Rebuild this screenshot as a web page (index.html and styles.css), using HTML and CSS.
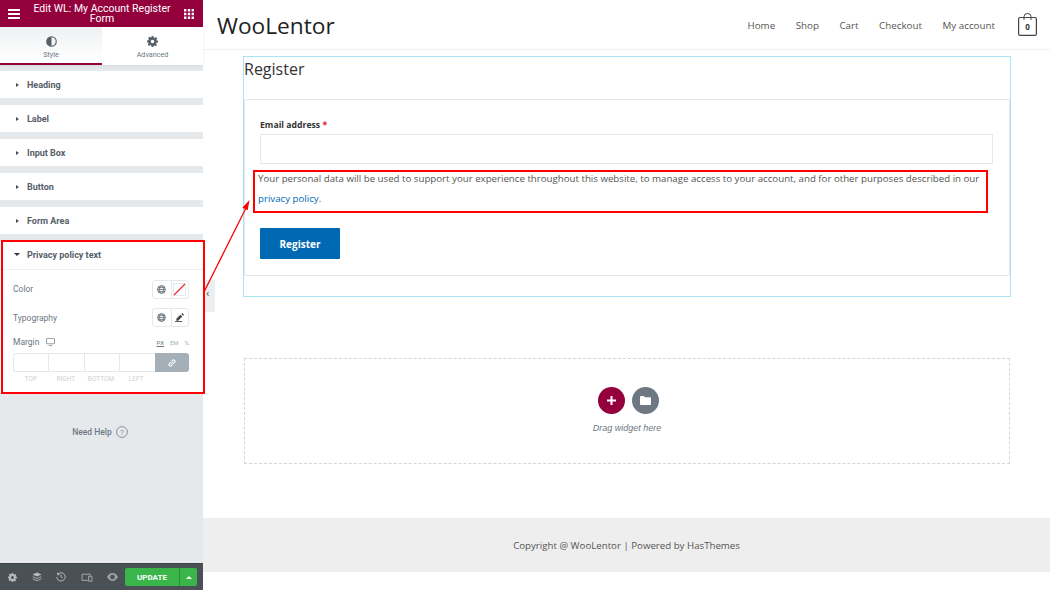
FILE: index.html
```html
<!DOCTYPE html>
<html lang="en">
<head>
<meta charset="utf-8">
<title>Edit WL: My Account Register Form</title>
<link rel="stylesheet" href="styles.css">
</head>
<body>
<div class="app">
  <aside class="panel">
    <header class="panel-head">
      <svg class="ic-menu" viewBox="0 0 12 10" width="12" height="10"><path d="M0 0h12v2H0zM0 4h12v2H0zM0 8h12v2H0z" fill="#fff"/></svg>
      <div class="panel-title">Edit WL: My Account Register Form</div>
      <svg class="ic-grid" viewBox="0 0 10 10" width="10" height="10"><path fill="#fff" d="M0 0h2.400v2.400H0zM3.800 0h2.400v2.400H3.800zM7.600 0H10v2.400H7.600zM0 3.800h2.400v2.400H0zM3.800 3.800h2.400v2.400H3.800zM7.600 3.800H10v2.400H7.600zM0 7.600h2.400V10H0zM3.800 7.600h2.400V10H3.800zM7.600 7.600H10V10H7.600z"/></svg>
    </header>
    <nav class="tabs">
      <div class="tab tab-active">
        <svg viewBox="0 0 12 12" width="11" height="11"><circle cx="6" cy="6" r="5.200" fill="none" stroke="#556068" stroke-width="1.200"/><path d="M6 .8a5.200 5.200 0 0 0 0 10.400z" fill="#556068"/></svg>
        <span>Style</span>
      </div>
      <div class="tab">
        <svg viewBox="0 0 12 12" width="11" height="11"><path fill="#556068" fill-rule="evenodd" d="M5 0h2l.3 1.600 1.100.5L9.800 1.200l1.400 1.400-.9 1.400.5 1.100L12 5v2l-1.600.3-.5 1.100.9 1.400-1.400 1.400-1.400-.9-1.100.5L7 12H5l-.3-1.600-1.100-.5-1.400.9-1.400-1.400.9-1.400-.5-1.100L0 7V5l1.600-.3.5-1.100-.9-1.400 1.400-1.400 1.400.9 1.100-.5zM6 4a2 2 0 1 0 0 4 2 2 0 0 0 0-4z"/></svg>
        <span>Advanced</span>
      </div>
    </nav>
    <div class="sections">
      <div class="section"><i class="caret"></i>Heading</div>
      <div class="section"><i class="caret"></i>Label</div>
      <div class="section"><i class="caret"></i>Input Box</div>
      <div class="section"><i class="caret"></i>Button</div>
      <div class="section"><i class="caret"></i>Form Area</div>
      <div class="privacy">
        <div class="section section-open"><i class="caret-down"></i>Privacy policy text</div>
        <div class="controls">
          <div class="control">
            <span>Color</span>
            <div class="btn-pair">
              <span class="mini">
                <svg viewBox="0 0 10 10" width="9" height="9"><circle cx="5" cy="5" r="4.300" fill="none" stroke="#556068"/><path d="M.7 5h8.600M5 .7c-3 2.600-3 6 0 8.600M5 .7c3 2.600 3 6 0 8.600M1.300 2.900h7.400M1.300 7.100h7.400" fill="none" stroke="#556068" stroke-width=".8"/></svg>
              </span>
              <span class="mini">
                <svg viewBox="0 0 13 13" width="13" height="13"><rect x=".5" y=".5" width="12" height="12" fill="none" stroke="#e6e9ec"/><line x1="1" y1="12" x2="12" y2="1" class="swatch-slash"/></svg>
              </span>
            </div>
          </div>
          <div class="control">
            <span>Typography</span>
            <div class="btn-pair">
              <span class="mini">
                <svg viewBox="0 0 10 10" width="9" height="9"><circle cx="5" cy="5" r="4.300" fill="none" stroke="#556068"/><path d="M.7 5h8.600M5 .7c-3 2.600-3 6 0 8.600M5 .7c3 2.600 3 6 0 8.600M1.300 2.900h7.400M1.300 7.100h7.400" fill="none" stroke="#556068" stroke-width=".8"/></svg>
              </span>
              <span class="mini">
                <svg viewBox="0 0 10 10" width="9" height="9"><path d="M1.500 6.500 6 2l2 2-4.500 4.500H1.500z" fill="#3f444b"/><path d="M7 1 8 0l2 2-1 1z" fill="#3f444b"/><path d="M0 9.500h8" stroke="#3f444b"/></svg>
              </span>
            </div>
          </div>
          <div class="margin-head">
            <span class="margin-label">Margin
              <svg viewBox="0 0 10 9" width="9" height="8"><rect x=".5" y=".5" width="9" height="6" rx=".6" fill="none" stroke="#8a939b"/><path d="M3 8.500h4" stroke="#8a939b"/></svg>
            </span>
            <span class="units"><u>PX</u><span>EM</span><span>%</span></span>
          </div>
          <div class="dims">
            <div class="dim"></div><div class="dim"></div><div class="dim"></div><div class="dim"></div>
            <div class="dim-link">
              <svg viewBox="0 0 10 10" width="8" height="8"><path d="M4.200 5.800 5.800 4.200M3.400 4.200 1.800 5.800a1.600 1.600 0 0 0 2.400 2.400l1.600-1.600M6.600 5.800l1.600-1.600a1.600 1.600 0 0 0-2.400-2.400L4.200 3.400" fill="none" stroke="#fff" stroke-width="1.400"/></svg>
            </div>
          </div>
          <div class="dim-labels"><span>TOP</span><span>RIGHT</span><span>BOTTOM</span><span>LEFT</span><span></span></div>
        </div>
      </div>
      <div class="help">Need Help
        <svg viewBox="0 0 12 12" width="12" height="12"><circle cx="6" cy="6" r="5.400" fill="none" stroke="#8a939b"/><text x="6" y="8.600" text-anchor="middle" class="help-q">?</text></svg>
      </div>
    </div>
    <footer class="panel-foot">
      <div class="foot-icons">
        <svg viewBox="0 0 12 12" width="9" height="9"><path fill="#b5bbc0" fill-rule="evenodd" d="M5 0h2l.3 1.600 1.100.5L9.800 1.200l1.400 1.400-.9 1.400.5 1.100L12 5v2l-1.600.3-.5 1.100.9 1.400-1.400 1.400-1.400-.9-1.100.5L7 12H5l-.3-1.600-1.100-.5-1.400.9-1.400-1.400.9-1.400-.5-1.100L0 7V5l1.600-.3.5-1.100-.9-1.400 1.400-1.400 1.400.9 1.100-.5zM6 4a2 2 0 1 0 0 4 2 2 0 0 0 0-4z"/></svg>
        <svg viewBox="0 0 12 12" width="10" height="10"><path fill="#b5bbc0" d="M6 .5 11.500 3 6 5.500.5 3z"/><path fill="none" stroke="#b5bbc0" d="M.8 5.600 6 8l5.200-2.400M.8 8.200 6 10.600l5.200-2.400"/></svg>
        <svg viewBox="0 0 12 12" width="10" height="10"><path fill="none" stroke="#b5bbc0" stroke-width="1.200" d="M2.200 2.600A5 5 0 1 1 1 6M1.800 .8v2.400h2.400M6 3.200V6l2 1.200"/></svg>
        <svg viewBox="0 0 14 11" width="12" height="9"><path fill="none" stroke="#b5bbc0" d="M8 9H1V1.500h10V3M9 4h4v6H9z"/></svg>
        <svg viewBox="0 0 14 10" width="11" height="8"><path fill="#9aa1a7" fill-rule="evenodd" d="M7 0c3 0 5.400 2 7 5-1.600 3-4 5-7 5S1.600 8 0 5c1.600-3 4-5 7-5zm0 2a3 3 0 1 0 0 6 3 3 0 0 0 0-6z"/></svg>
      </div>
      <div class="update">
        <span class="update-main">UPDATE</span>
        <span class="update-more"><i></i></span>
      </div>
    </footer>
  </aside>

  <div class="collapse">&#8249;</div>

  <main class="site">
    <header class="site-head">
      <div class="logo">WooLentor</div>
      <nav class="menu">
        <span>Home</span><span>Shop</span><span>Cart</span><span>Checkout</span><span>My account</span>
      </nav>
      <div class="bag">
        <svg viewBox="0 0 19 23" width="19" height="23"><rect x=".6" y="4.500" width="17.800" height="17.900" rx="1.500" fill="none" stroke="#444" stroke-width="1.200"/><path d="M6 7V3.500a3.500 3 0 0 1 7 0V7" fill="none" stroke="#444"/></svg>
        <b>0</b>
      </div>
    </header>

    <div class="content">
      <section class="widget">
        <h2>Register</h2>
        <div class="form-box">
          <label class="field-label">Email address <em>*</em></label>
          <div class="input"></div>
          <p class="policy">Your personal data will be used to support your experience throughout this website, to manage access to your account, and for other purposes described in our <a>privacy policy</a>.</p>
          <div class="submit">Register</div>
        </div>
      </section>

      <section class="dropzone">
        <div class="drop-btns">
          <span class="circle circle-add"><svg viewBox="0 0 9 9" width="9" height="9"><path d="M3.500 0h2v3.500H9v2H5.500V9h-2V5.500H0v-2h3.500z" fill="#fff"/></svg></span>
          <span class="circle circle-lib"><svg viewBox="0 0 11 9" width="11" height="9"><path d="M0 1a1 1 0 0 1 1-1h3l1 1.300h5a1 1 0 0 1 1 1V8a1 1 0 0 1-1 1H1a1 1 0 0 1-1-1z" fill="#fff"/></svg></span>
        </div>
        <div class="drop-text">Drag widget here</div>
      </section>
    </div>

    <footer class="site-foot">Copyright @ WooLentor | Powered by HasThemes</footer>
  </main>
</div>

<div class="mark mark-panel"></div>
<div class="mark mark-text"></div>
<svg class="arrow" viewBox="0 0 48 94" width="48" height="94"><path d="M0 92 43 6" stroke="#f00" stroke-width="1.300" fill="none"/><path d="M45.500 0 43.700 10.300 38.300 7.700z" fill="#f00"/></svg>
</body>
</html>
```
FILE: styles.css
```css
* { box-sizing: border-box; }
html, body { margin: 0; height: 100%; }
body { width: 1050px; height: 590px; overflow: hidden; background: #fff; position: relative; font-family: "Open Sans", sans-serif; color: #444; }
.app { display: flex; height: 590px; }

.panel { width: 203px; flex: none; display: flex; flex-direction: column; background: #e6e9ec; font-family: Roboto, sans-serif; }
.panel-head { height: 27px; background: #93003c; display: flex; align-items: center; padding: 0 9px 0 8px; color: #fff; }
.panel-title { flex: 1; text-align: center; font-size: 10.500px; line-height: 10px; font-weight: 400; padding: 0 8px; }
.tabs { height: 38px; display: flex; background: #fff; box-shadow: 0 1px 3px rgba(0,0,0,.08); }
.tab { width: 102px; display: flex; flex-direction: column; align-items: center; padding-top: 9px; gap: 3px; font-size: 7.200px; color: #6d7882; }
.tab:last-child { flex: 1; }
.tab-active { background: linear-gradient(#eef0f2, #fff 90%); border-bottom: 2px solid #93003c; }

.sections { flex: 1; padding-top: 6px; }
.section { height: 27px; margin-bottom: 7px; background: #fff; display: flex; align-items: center; padding-left: 16px; font-size: 9px; font-weight: 700; color: #556068; }
.caret { width: 0; height: 0; border-left: 3px solid #4a4f55; border-top: 2.500px solid transparent; border-bottom: 2.500px solid transparent; margin-right: 8px; }
.caret-down { width: 0; height: 0; border-top: 3px solid #33373c; border-left: 3px solid transparent; border-right: 3px solid transparent; margin: 0 7px 0 -2px; }
.privacy { background: #fff; height: 152px; }
.section-open { height: 29px; margin: 0; padding-bottom: 1px; border-bottom: 1px solid #eef0f2; }
.controls { padding: 2px 14px 0 13px; color: #6d7882; font-size: 8.500px; }
.control { height: 28.500px; display: flex; justify-content: space-between; align-items: center; padding-top: 6px; }
.btn-pair { display: flex; border: 1px solid #e6e9ec; border-radius: 3px; height: 19px; }
.mini { width: 17.500px; display: flex; align-items: center; justify-content: center; }
.mini + .mini { border-left: 1px solid #e6e9ec; }
.swatch-slash { stroke: #f01c28; stroke-width: 1.100; }
.margin-head { display: flex; justify-content: space-between; align-items: center; height: 12px; margin-top: 7px; }
.margin-label { display: flex; align-items: center; gap: 7px; }
.units { display: flex; gap: 6px; font-size: 6px; color: #a4afb7; }
.units u { color: #6d7882; }
.dims { display: flex; height: 19px; margin-top: 5px; }
.dim { flex: 1; border: 1px solid #e6e9ec; border-right: 0; }
.dim:first-child { border-radius: 3px 0 0 3px; }
.dim-link { flex: 1; background: #a4afb7; border-radius: 0 3px 3px 0; display: flex; align-items: center; justify-content: center; }
.dim-labels { display: flex; margin-top: 3px; }
.dim-labels span { flex: 1; text-align: center; font-size: 6.500px; color: #ccd1d5; }
.help { margin-top: 33px; padding-right: 3px; display: flex; justify-content: center; align-items: center; gap: 4px; font-size: 8.500px; font-weight: 500; color: #6d7882; }
.help-q { font: 8px Roboto, sans-serif; fill: #8a939b; }
.panel-foot { height: 27px; background: #495157; border-top: 1px solid #3f444b; display: flex; align-items: center; padding-right: 6px; }
.foot-icons { width: 125px; flex: none; display: flex; justify-content: space-between; align-items: center; padding: 0 7px 0 8px; }
.update { display: flex; width: 72px; height: 18px; border-radius: 2px; overflow: hidden; background: #39b54a; color: #fff; font-size: 8px; font-weight: 700; }
.update-main { flex: 1; display: flex; align-items: center; justify-content: center; }
.update-more { width: 18px; border-left: 1px solid #2a8a37; display: flex; align-items: center; justify-content: center; }
.update-more i { width: 0; height: 0; border-bottom: 3px solid #fff; border-left: 3px solid transparent; border-right: 3px solid transparent; }

.collapse { position: absolute; left: 205px; top: 280px; width: 10px; height: 32px; background: #eceef0; color: #555; font: 11px/27px Roboto, sans-serif; text-align: left; padding-left: 1px; }

.site { flex: 1; min-width: 0; display: flex; flex-direction: column; }
.site-head { height: 50px; flex: none; border-bottom: 1px solid #f1f1f1; display: flex; align-items: center; padding: 0 13px 0 14px; }
.logo { font-size: 22.700px; color: #222; flex: 1; line-height: 52px; padding-top: 2px; }
.menu { display: flex; gap: 20.500px; font-size: 9.800px; color: #555; margin: 1px 23px 0 0; }
.bag { position: relative; width: 19px; height: 23px; }
.bag svg { display: block; }
.bag b { position: absolute; left: 0; right: 0; top: 8px; text-align: center; font-size: 8px; line-height: 12px; color: #333; }

.content { flex: 1; padding: 6px 40px 0; }
.widget { width: 768px; height: 241px; border: 1px solid #a6e6f5; }
.widget h2 { margin: 0; font-size: 16px; font-weight: 400; line-height: 24px; color: #333; height: 42px; }
.form-box { height: 177px; border: 1px solid #e6e6e6; border-radius: 2px; padding: 17px 15px 0; }
.field-label { display: block; font-size: 8.700px; font-weight: 700; color: #333; line-height: 16px; }
.field-label em { color: #e2231a; font-style: normal; }
.input { width: 733px; height: 30px; margin-top: 1px; border: 1px solid #e8e8e8; }
.policy { margin: 5px 0 0 -2px; font-size: 9.700px; line-height: 20px; color: #555; width: 740px; }
.policy a { color: #0069b4; }
.submit { width: 80px; height: 31px; margin-top: 19px; background: #0069b4; color: #fff; border-radius: 1px; font-size: 10px; font-weight: 700; display: flex; align-items: center; justify-content: center; }

.dropzone { width: 766px; height: 106px; margin-top: 61px; margin-left: 1px; border: 1px dashed #d5d5d5; display: flex; flex-direction: column; align-items: center; padding-top: 28px; }
.drop-btns { display: flex; gap: 7px; margin-left: 3px; }
.circle { width: 27px; height: 27px; border-radius: 50%; display: flex; align-items: center; justify-content: center; }
.circle-add { background: #93003c; }
.circle-lib { background: #6d7882; }
.drop-text { margin-top: 7px; font: italic 9px/14px "Liberation Sans", sans-serif; color: #6d7882; }

.site-foot { height: 54px; flex: none; margin-bottom: 18px; background: #eee; display: flex; align-items: center; justify-content: center; font-size: 9.700px; color: #555; }

.mark { position: absolute; border: 2px solid #f00; }
.mark-panel { left: 1px; top: 240px; width: 204px; height: 154px; }
.mark-text { left: 253px; top: 170px; width: 735px; height: 43px; }
.arrow { position: absolute; left: 204px; top: 200px; }
```
